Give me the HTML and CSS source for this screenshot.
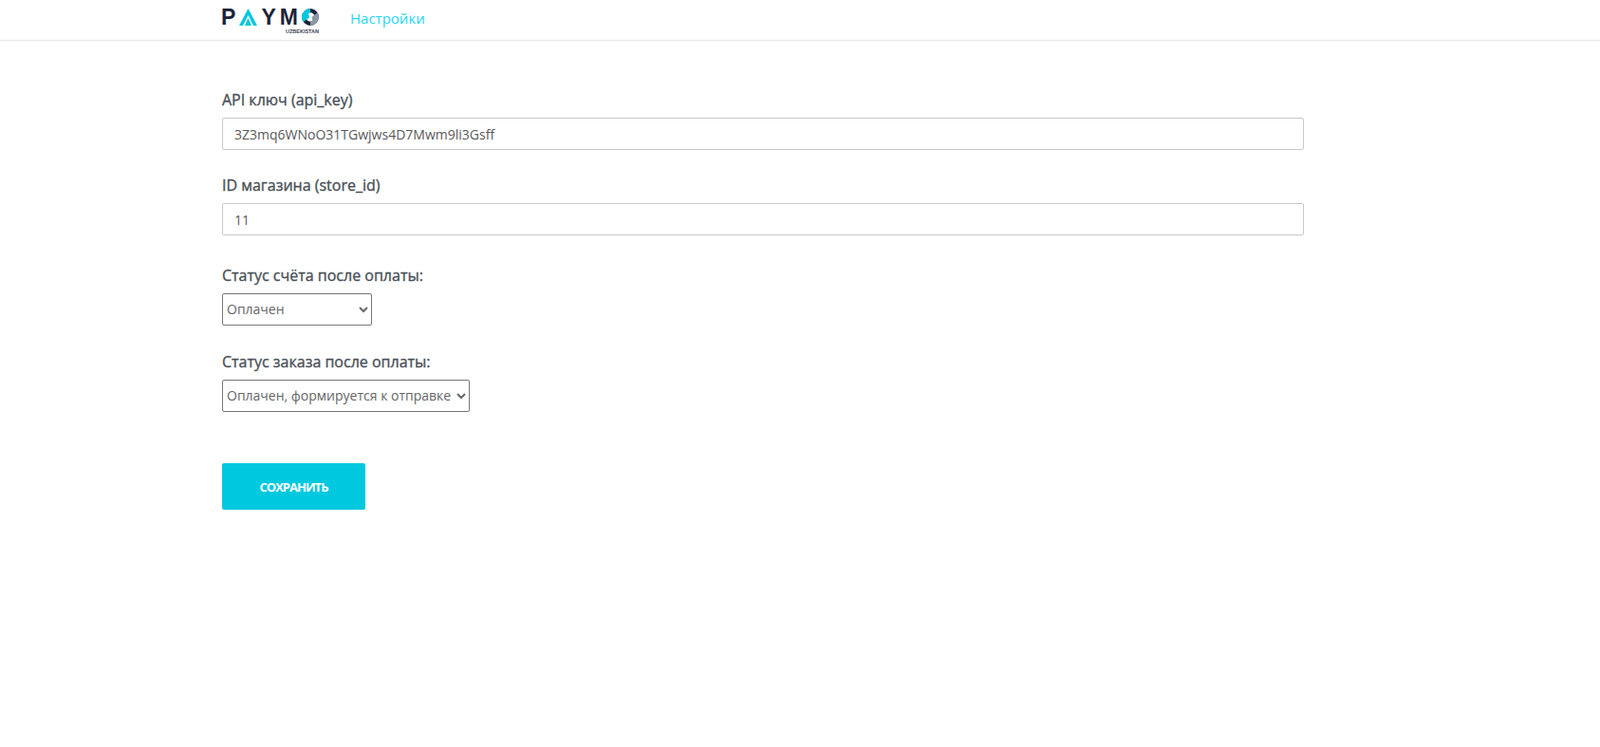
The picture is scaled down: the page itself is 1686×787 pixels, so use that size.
FILE: index.html
```html
<!DOCTYPE html>
<html lang="ru">
<head>
<meta charset="utf-8">
<title>Paymo</title>
<link rel="stylesheet" href="styles.css">
</head>
<body>
<header class="topbar">
  <div class="topbar-inner">
    <div class="logo">
      <div class="logo-word">
        <span class="logo-letter logo-first">P</span>
        <svg class="logo-a" viewBox="0 0 19 18" width="19" height="18"><path d="M9.500 0 19 18H15L9.500 7 4 18H0Z" fill="#00c8de"/><path d="M9.500 10 13 18H6Z" fill="#00c8de"/></svg>
        <span class="logo-letter">Y</span>
        <span class="logo-letter">M</span>
        <svg class="logo-o" viewBox="0 0 18 18" width="18" height="18"><circle cx="9" cy="9" r="6.800" fill="none" stroke="#1b2438" stroke-width="4.200"/><path d="M9 0a9 9 0 0 0-9 9c0 2 .6 3.600 1.600 5L8 9.500 7 5.200 9 4.200Z" fill="#00c8de"/><path d="M11 8.500 16.500 4.500c1 1.400 1.500 2.900 1.500 4.500a9 9 0 0 1-9 9V13.800L11 12.800Z" fill="#8d97a5"/></svg>
      </div>
      <div class="logo-sub">UZBEKISTAN</div>
    </div>
    <a class="nav-link" href="#">Настройки</a>
  </div>
</header>
<main class="content">
  <form class="settings">
    <div class="group group-text">
      <div class="field">
        <label class="field-label" for="api">API ключ (api_key)</label>
        <input class="text-input" id="api" type="text" value="3Z3mq6WNoO31TGwjws4D7Mwm9li3Gsff">
      </div>
      <div class="field">
        <label class="field-label" for="store">ID магазина (store_id)</label>
        <input class="text-input" id="store" type="text" value="11">
      </div>
    </div>
    <div class="group group-select">
      <div class="field">
        <label class="field-label" for="s1">Статус счёта после оплаты:</label>
        <select class="select select-short" id="s1"><option>Оплачен</option></select>
      </div>
      <div class="field">
        <label class="field-label" for="s2">Статус заказа после оплаты:</label>
        <select class="select select-long" id="s2"><option>Оплачен, формируется к отправке</option></select>
      </div>
    </div>
    <button class="save" type="button">СОХРАНИТЬ</button>
  </form>
</main>
</body>
</html>
```
FILE: styles.css
```css
* { box-sizing: border-box; }
body {
  margin: 0;
  background: #fff;
  font-family: "Open Sans", "Noto Sans", sans-serif;
  color: #495057;
}
.topbar {
  height: 43px;
  border-bottom: 1px solid #e7e7e7;
  padding-left: 234px;
}
.topbar-inner {
  display: flex;
  align-items: flex-start;
  gap: 33px;
}
.logo {
  width: 102px;
  padding-top: 9px;
}
.logo-word {
  display: flex;
  align-items: center;
  justify-content: space-between;
  height: 18px;
}
.logo-letter {
  font-family: "Liberation Sans", sans-serif;
  font-weight: 700;
  font-size: 23px;
  line-height: 18px;
  color: #1b2438;
}
.logo-first {
  margin-left: -1px;
}
.logo-sub {
  font-family: "Liberation Sans", sans-serif;
  font-weight: 700;
  font-size: 5.500px;
  line-height: 8px;
  text-align: right;
  color: #3a4252;
  margin-top: 2px;
}
.nav-link {
  font-size: 15px;
  line-height: 38px;
  color: #26d7f2;
  text-decoration: none;
}
.content {
  padding: 50px 0 0 234px;
}
.settings {
  width: 1140px;
  display: flex;
  flex-direction: column;
  align-items: flex-start;
}
.group {
  width: 100%;
  display: flex;
  flex-direction: column;
}
.group-text {
  gap: 25px;
  margin-bottom: 30px;
}
.group-select {
  gap: 26px;
}
.field-label {
  display: block;
  font-size: 16px;
  font-weight: 400;
  -webkit-text-stroke: 0.35px #495057;
  line-height: 25px;
  margin-bottom: 6px;
  color: #495057;
}
.text-input {
  display: block;
  width: 100%;
  height: 34px;
  padding: 0 12px;
  border: 1px solid #c8c8c8;
  border-radius: 2px;
  background: #fff;
  font: 14px "Open Sans", sans-serif;
  color: #595959;
  outline: none;
}
.select {
  display: block;
  height: 34px;
  border: 1px solid #767676;
  border-radius: 2px;
  background: #fff;
  font: 14px "Open Sans", sans-serif;
  color: #666;
  padding: 0 0 2px;
}
.select-short { width: 158px; }
.select-long { width: 261px; }
.save {
  margin-top: 54px;
  width: 151px;
  height: 49px;
  border: 0;
  border-radius: 2px;
  background: #00c8de;
  color: #fff;
  font: 700 13px "Open Sans", sans-serif;
  letter-spacing: -1px;
}
```
